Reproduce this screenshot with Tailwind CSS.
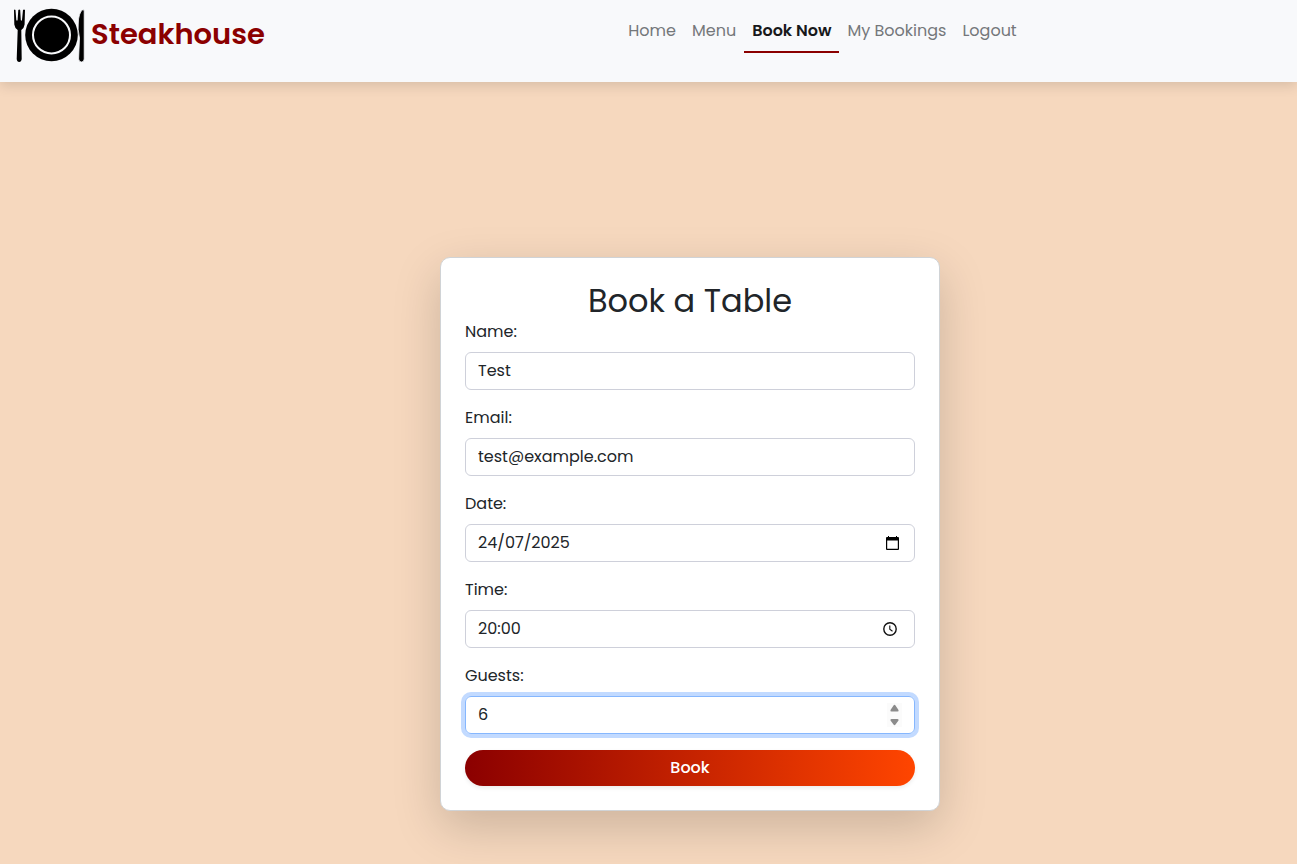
<!DOCTYPE html>
<html lang="en-GB">
<head>
<meta charset="utf-8">
<meta name="viewport" content="width=device-width, initial-scale=1">
<title>Steakhouse - Book Now</title>
<script src="https://cdn.jsdelivr.net/npm/@tailwindcss/browser@4"></script>
</head>
<body class="flex min-h-screen flex-col bg-[#f6d8be] font-[Poppins,Inter,sans-serif] text-base text-[#212529]">
<header class="relative flex items-start bg-[#f8f9fb] pb-5 shadow-[0_4px_12px_rgba(0,0,0,0.12)]">
  <a href="#" class="flex items-start gap-1.5 pt-2 pl-3.5 text-[29px] leading-[52px] font-semibold text-[#8b0000]">
    <svg class="h-[54px] w-[71px]" viewBox="0 0 71 54" fill="#000" aria-hidden="true">
      <path d="M0 2Q.700 1 1.500 2L2.300 12Q3 13.500 3.600 12L4.300 2Q5.300 1 6.200 2L6.800 12Q7.400 13.500 8 12L9 2Q10 1 11 2L10.600 16.500Q10 20.500 7.300 22L7.700 51Q7.300 54 5.200 54Q3 54 2.700 51L3.700 22Q.700 20 .300 16.500Z"/>
      <circle cx="37.500" cy="27" r="26.300"/>
      <circle cx="37.500" cy="27" r="18.500" fill="none" stroke="#f8f9fb" stroke-width="2"/>
      <path d="M70.200 2Q66.500 .500 64.500 11Q63.300 22 65.500 30L64.600 51Q65 54 67.500 54Q70 54 70.200 51Z" stroke="#f8f9fb" stroke-width="0.800"/>
    </svg>
    <span>Steakhouse</span>
  </a>
  <nav class="flex flex-1 justify-center pt-[11px] pl-[83px] text-[#74777a]" aria-label="Main">
    <a href="#" class="border-b-2 border-transparent p-2 leading-6">Home</a>
    <a href="#" class="border-b-2 border-transparent p-2 leading-6">Menu</a>
    <a href="#" aria-current="page" class="border-b-2 border-[#8b0000] p-2 leading-6 font-semibold text-[#17181a]">Book Now</a>
    <a href="#" class="border-b-2 border-transparent p-2 leading-6">My Bookings</a>
    <a href="#" class="border-b-2 border-transparent p-2 leading-6">Logout</a>
  </nav>
</header>
<main class="flex flex-1 justify-center pt-[175px] pb-[53px] sm:pl-[83px]">
  <form class="flex w-full max-w-[500px] flex-col self-start rounded-[10px] border border-[#d0d3d6] bg-white p-6 shadow-[0_16px_48px_rgba(0,0,0,0.175)]">
    <h1 class="text-center text-[32px] leading-[38px]">Book a Table</h1>
    <div class="mb-4">
      <label for="name" class="mb-2 block leading-6">Name:</label>
      <input id="name" type="text" value="Test" class="h-[38px] w-full rounded-md border border-[#ced0da] px-3 pb-0.5 outline-none">
    </div>
    <div class="mb-4">
      <label for="email" class="mb-2 block leading-6">Email:</label>
      <input id="email" type="email" value="test@example.com" class="h-[38px] w-full rounded-md border border-[#ced0da] px-3 pb-0.5 outline-none">
    </div>
    <div class="mb-4">
      <label for="date" class="mb-2 block leading-6">Date:</label>
      <div class="relative">
        <input id="date" type="text" value="24/07/2025" class="h-[38px] w-full rounded-md border border-[#ced0da] px-3 pb-0.5 outline-none">
        <svg class="pointer-events-none absolute top-3 right-4 h-[14px] w-[13px]" viewBox="0 0 13 14" aria-hidden="true"><path d="M2 0h1v1h7V0h1v1h1q1 0 1 1v11q0 1-1 1H1q-1 0-1-1V2q0-1 1-1h1zM1.200 4.500v8.200h10.600V4.500z" fill-rule="evenodd"/></svg>
      </div>
    </div>
    <div class="mb-4">
      <label for="time" class="mb-2 block leading-6">Time:</label>
      <div class="relative">
        <input id="time" type="text" value="20:00" class="h-[38px] w-full rounded-md border border-[#ced0da] px-3 pb-0.5 outline-none">
        <svg class="pointer-events-none absolute top-3 right-[18px] size-[14px]" viewBox="0 0 14 14" fill="none" stroke="#111" aria-hidden="true"><circle cx="7" cy="7" r="6.200" stroke-width="1.400"/><path d="M6.800 3.500V7.300L9.500 9.300" stroke-width="1.100"/></svg>
      </div>
    </div>
    <div class="mb-4">
      <label for="guests" class="mb-2 block leading-6">Guests:</label>
      <div class="relative">
        <input id="guests" type="number" value="6" class="h-[38px] w-full [appearance:textfield] rounded-md border border-[#86b7fe] px-3 pb-0.5 shadow-[0_0_0_4px_#c2daff] outline-none">
        <svg class="pointer-events-none absolute top-[7px] right-[13px] h-6 w-[15px] bg-[#fbfbfb]" viewBox="0 0 15 24" fill="#8b8b8b" aria-hidden="true"><path d="M3.500 7L6.500 2.500Q7.500 1 8.500 2.500L11.500 7Q12 8.500 10.500 8.500H4.500Q3 8.500 3.500 7ZM3.500 17.500L6.500 21.500Q7.500 23 8.500 21.500L11.500 17.500Q12 16 10.500 16H4.500Q3 16 3.500 17.500Z"/></svg>
      </div>
    </div>
    <button type="button" class="h-9 rounded-full bg-linear-[90deg,#8b0000,#ff4500] font-medium text-white shadow-[0_2px_4px_rgba(0,0,0,0.08)]">Book</button>
  </form>
</main>
</body>
</html>
